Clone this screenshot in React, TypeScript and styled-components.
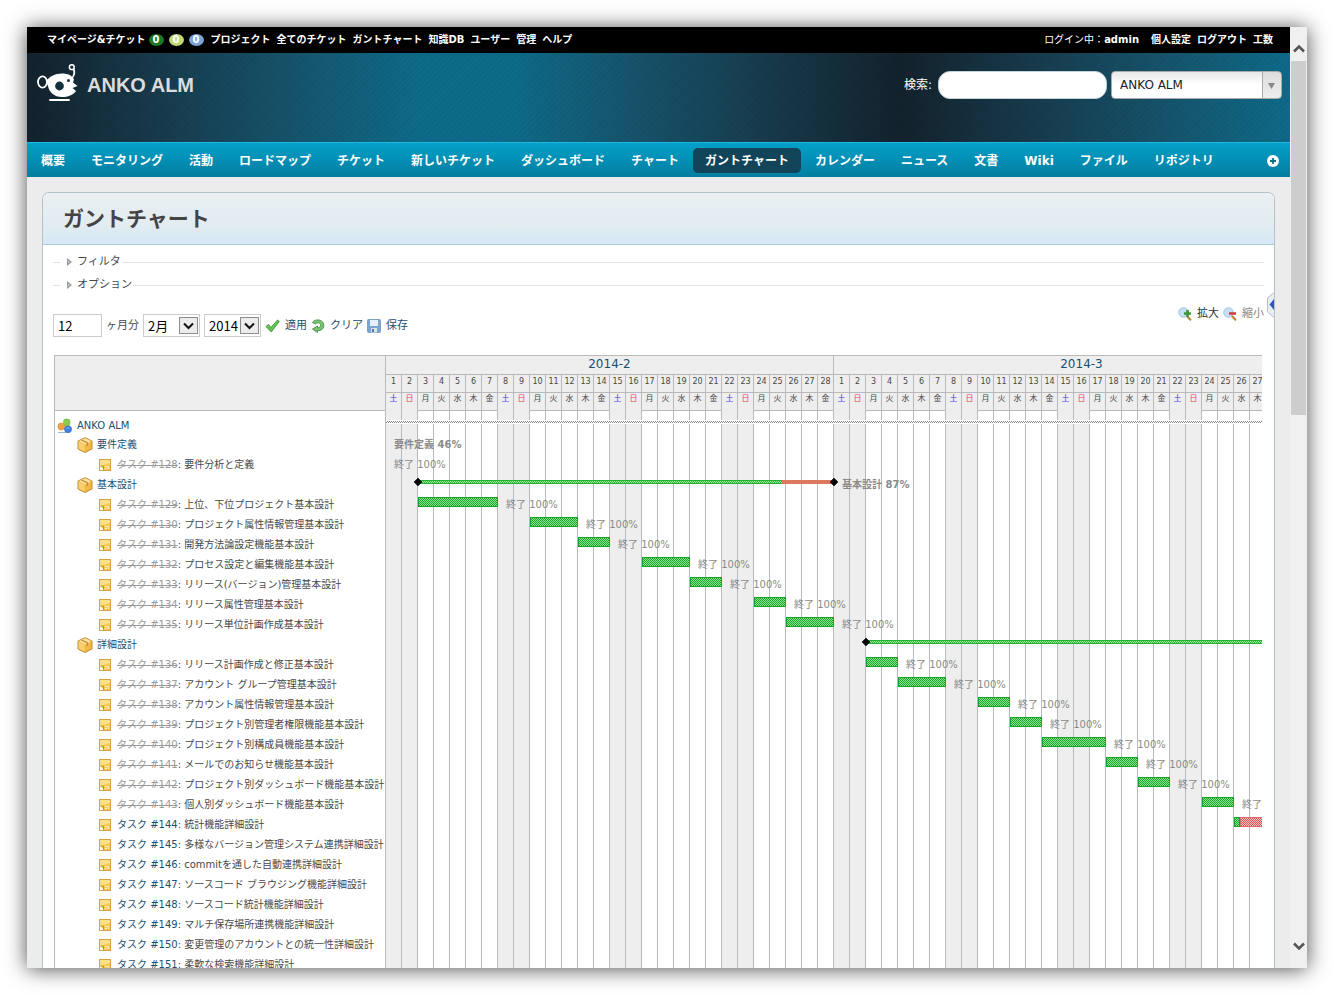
import React from "react";
import styled, { createGlobalStyle, css } from "styled-components";

const DAY = 16;
const uiFont = `"DejaVu Sans", "Noto Sans CJK JP", sans-serif`;
const link = "#1b4f6f";
const line = "#b9b9b9";
const shade = "#eeeeee";

const GlobalStyle = createGlobalStyle`
  *, *::before, *::after { box-sizing: border-box; }
  body {
    margin: 0;
    padding: 27px;
    background: #fff;
    color: #484848;
    font: 11px/18px ${uiFont};
    overflow: hidden;
  }
  a { color: inherit; text-decoration: none; }
  ul { margin: 0; padding: 0; list-style: none; }
  button, input, select { font: inherit; color: inherit; margin: 0; }
  svg { display: block; flex: none; }
`;

const Window = styled.div`
  display: flex;
  height: calc(100vh - 54px);
  overflow: hidden;
  background: #ececec;
`;
const WindowShadow = styled.div`
  box-shadow: 0 1px 20px rgba(0, 0, 0, 0.7);
`;
const Page = styled.div`
  flex: 1;
  min-width: 0;
  display: flex;
  flex-direction: column;
  overflow: hidden;
`;

const TopBar = styled.div`
  flex: none;
  height: 26px;
  padding: 0 17px 0 20px;
  display: flex;
  justify-content: space-between;
  align-items: center;
  background: #000;
  color: #fff;
  font-size: 10px;
  font-weight: bold;
  white-space: nowrap;
`;
const TopMenu = styled.nav`
  display: flex;
  align-items: center;
  gap: 6px;
`;
const Badges = styled.span`
  display: flex;
  gap: 5px;
  margin: 0 1px 0 -3px;
`;
const Badge = styled.a<{ $color: string }>`
  width: 15px;
  height: 12px;
  border-radius: 50%;
  background: ${(p) => p.$color};
  font-size: 10px;
  line-height: 12px;
  text-align: center;
`;
const Login = styled.span`
  font-weight: normal;
  margin-right: 6px;
`;

const Header = styled.header`
  flex: none;
  height: 89px;
  padding: 11px 8px 0 10px;
  display: flex;
  justify-content: space-between;
  align-items: flex-start;
  background:
    repeating-linear-gradient(135deg, rgba(0, 0, 0, 0.05) 0 1px, transparent 1px 4px),
    repeating-linear-gradient(90deg, #13222c 0, #173c4e 140px, #15566f 280px, #0d6a88 390px, #0d6a88 490px, #15566f 590px, #173c4e 730px, #13222c 874px);
`;
const Brand = styled.a`
  display: flex;
  align-items: flex-start;
  gap: 8px;
  color: #dcdcdc;
  font: bold 20px/42px "Liberation Sans", sans-serif;
`;
const Search = styled.form`
  display: flex;
  align-items: center;
  padding-top: 7px;
  color: #fff;
  font-size: 12px;
`;
const SearchInput = styled.input`
  width: 169px;
  height: 28px;
  margin: 0 4px 0 6px;
  padding: 0 12px;
  border: 1px solid #c3d3da;
  border-radius: 12px;
  background: #fff;
  color: #333;
  outline: none;
`;
const SelectWrap = styled.span`
  position: relative;
  display: inline-flex;
`;
const ProjectSelect = styled.select`
  appearance: none;
  width: 171px;
  height: 28px;
  padding: 0 28px 0 8px;
  border: 1px solid #aaa;
  border-radius: 4px;
  color: #222;
  background:
    linear-gradient(#aaa, #aaa) right 18px top / 1px 100% no-repeat,
    linear-gradient(#ddd, #eee) right / 18px 100% no-repeat,
    linear-gradient(#e9e9e9, #fff 50%);
`;
const SelectArrow = styled.svg`
  position: absolute;
  right: 7px;
  top: 12px;
  pointer-events: none;
`;

const MainMenu = styled.nav`
  flex: none;
  height: 35px;
  padding: 5px 11px 4px 2px;
  border-top: 1px solid #1fb9df;
  display: flex;
  align-items: center;
  justify-content: space-between;
  background: linear-gradient(#03a0c9, #047d9f);
`;
const MenuList = styled.ul`
  display: flex;
  gap: 2px;
`;
const MenuLink = styled.a<{ $active?: boolean }>`
  display: block;
  padding: 2px 12px 0;
  border-radius: 5px;
  color: #fff;
  font-size: 12px;
  font-weight: bold;
  line-height: 23px;
  white-space: nowrap;
  ${(p) => p.$active && css`background: #12455a;`}
`;
const IconButton = styled.button`
  padding: 0;
  border: 0;
  background: none;
  cursor: pointer;
`;

const Panel = styled.main`
  position: relative;
  flex: 1 0 auto;
  margin: 15px 15px 0;
  border: 1px solid #b4c2c9;
  border-bottom: 0;
  border-radius: 7px 7px 0 0;
  background: #fff;
`;
const PanelHead = styled.div`
  height: 52px;
  padding: 0 20px;
  border-bottom: 1px solid #a9cad9;
  border-radius: 6px 6px 0 0;
  background: linear-gradient(#ebeff1, #e2ecf1 60%, #d6e8f4);
`;
const Title = styled.h1`
  margin: 0;
  color: #444;
  font: bold 21px/49px "Noto Sans CJK JP", sans-serif;
`;
const PanelBody = styled.div`
  padding: 8px 10px 0;
`;
const FoldSet = styled.fieldset`
  min-width: 0;
  height: 18px;
  margin: 0 0 5px;
  padding: 0 7px;
  border: 0;
  border-top: 1px solid #e2e2e2;
`;
const FoldLegend = styled.legend`
  padding: 0 1px 0 7px;
`;
const FoldButton = styled.button`
  display: flex;
  align-items: center;
  gap: 5px;
  padding: 0;
  border: 0;
  background: none;
  line-height: 18px;
`;

const Toolbar = styled.div`
  display: flex;
  justify-content: space-between;
  align-items: flex-start;
  padding-top: 6px;
  white-space: nowrap;
`;
const Controls = styled.form`
  display: flex;
  align-items: center;
  gap: 4px;
  margin: 9px 0 18px;
`;
const fieldBox = css`
  height: 23px;
  border: 1px solid #ccc;
  border-radius: 0;
  background: #fff;
  color: #000;
  font: 13px/20px "Noto Sans CJK JP", sans-serif;
`;
const MonthsInput = styled.input`
  ${fieldBox}
  width: 49px;
  padding: 0 4px;
`;
const DateSelect = styled.select`
  ${fieldBox}
  appearance: none;
  width: 57px;
  padding: 0 0 0 4px;
`;
const DateArrow = styled.span`
  position: absolute;
  right: 2px;
  top: 3px;
  width: 19px;
  height: 17px;
  display: grid;
  place-items: center;
  border: 1px solid #8c8c8c;
  background: #ececec;
  pointer-events: none;
`;
const Action = styled.a<{ $tone?: string }>`
  display: flex;
  align-items: center;
  gap: 5px;
  color: ${(p) => p.$tone ?? link};
`;
const Zoomers = styled.div`
  display: flex;
  gap: 4px;
`;
const SideHandle = styled.button`
  position: absolute;
  right: 0;
  top: 99px;
  padding: 0;
  border: 0;
  background: none;
`;

const Gantt = styled.section`
  display: grid;
  grid-template-columns: 332px minmax(0, 1fr);
  margin: 0 2px 0 1px;
  border-top: 1px solid ${line};
`;
const TreePane = styled.div`
  border: solid ${line};
  border-width: 0 1px;
`;
const TreeHead = styled.div`
  height: 55px;
  border-bottom: 1px solid ${line};
  background: ${shade};
`;
const Tree = styled.ul`
  padding: 6px 0 2px;
  font-size: 10px;
`;
const TreeRow = styled.li<{ $level: number }>`
  height: ${(p) => (p.$level === 0 ? 18 : 20)}px;
  padding-left: ${(p) => [2, 22, 44][p.$level]}px;
  display: flex;
  align-items: center;
  gap: ${(p) => (p.$level === 2 ? 6 : 4)}px;
  line-height: 20px;
  white-space: nowrap;
`;
const TreeLink = styled.a<{ $closed?: boolean }>`
  color: ${(p) => (p.$closed ? "#999" : link)};
  ${(p) => p.$closed && css`text-decoration: line-through;`}
`;

const Timeline = styled.div`
  overflow: hidden;
  display: grid;
  grid-template-rows: 18px 1fr;
`;
const Months = styled.div`
  display: flex;
  background: ${shade};
`;
const Month = styled.div`
  flex: none;
  border-right: 1px solid ${line};
  color: ${link};
  font-size: 12px;
  line-height: 17px;
  text-align: center;
`;
const Canvas = styled.div`
  display: grid;
  grid-template-columns: minmax(0, 1fr);
  > * { grid-area: 1 / 1; }
`;
const Days = styled.div`
  display: flex;
`;
const Day = styled.div<{ $off: boolean }>`
  flex: none;
  width: ${DAY}px;
  border-right: 1px solid ${line};
  background: ${(p) => (p.$off ? shade : "#fff")};
  font-size: 8px;
  text-align: center;
`;
const DayNumber = styled.div`
  height: 18px;
  border-top: 1px solid ${line};
  background: ${shade};
  line-height: 14px;
`;
const DayName = styled.div<{ $dow: number }>`
  height: 19px;
  border-top: 1px solid ${line};
  border-bottom: 1px solid ${(p) => (p.$dow > 4 ? shade : line)};
  background: ${shade};
  line-height: 11px;
  color: ${(p) => (p.$dow === 5 ? "#3d3de0" : p.$dow === 6 ? "#e04848" : "inherit")};
`;
const checker = (a: string, b: string) =>
  `repeating-conic-gradient(${a} 0 25%, ${b} 0 50%) 0 0 / 2px 2px`;

const Rows = styled.div`
  position: relative;
  padding-top: 46px;
  overflow: hidden;
`;
const TopRule = styled.div`
  height: 4px;
  margin: 0 0 10px;
  border: solid #fff;
  border-width: 1px 0;
  background: ${checker("#888", "#fff")};
`;
const GanttRow = styled.div`
  height: 20px;
  display: flex;
  align-items: flex-start;
`;
const RowLabel = styled.span<{ $strong?: boolean }>`
  flex: none;
  margin-left: 8px;
  color: #8a8a8a;
  font-size: 10px;
  font-weight: ${(p) => (p.$strong ? "bold" : "normal")};
  line-height: 22px;
  white-space: nowrap;
`;
const Bar = styled.div`
  flex: none;
  display: flex;
  height: 10px;
  margin-top: 3px;
`;
const BarPart = styled.div<{ $late?: boolean }>`
  height: 100%;
  border: 1px solid ${(p) => (p.$late ? "#dd6a6a" : "#17a329")};
  background: ${(p) => (p.$late ? checker("#d65555", "#f6c3c3") : checker("#14a824", "#8fe296"))};
`;
const GroupBar = styled.div`
  position: relative;
  flex: none;
  display: flex;
  height: 4px;
  margin-top: 6px;
`;
const GroupPart = styled.div<{ $late?: boolean }>`
  border: solid ${(p) => (p.$late ? "#dd7760" : "#25b334")};
  border-width: 1px 0;
  background: ${(p) => (p.$late ? "#dd7760" : checker("#25b334", "#a5eba9"))};
`;
const Diamond = styled.svg<{ $end?: boolean }>`
  position: absolute;
  top: -2px;
  ${(p) => (p.$end ? "right: -4px;" : "left: -4px;")}
`;

const ScrollTrack = styled.div`
  flex: none;
  width: 17px;
  display: flex;
  flex-direction: column;
  align-items: center;
  background: #f0f0f0;
`;
const ScrollButton = styled.button<{ $up?: boolean }>`
  width: 17px;
  height: 34px;
  padding: ${(p) => (p.$up ? "8px 0 0" : "0 0 10px")};
  border: 0;
  background: none;
  display: grid;
  place-items: center;
`;
const ScrollThumb = styled.div`
  width: 15px;
  height: 354px;
  margin-bottom: auto;
  background: #cdcdcd;
`;

const Logo = () => (
  <svg width="42" height="38" viewBox="0 0 42 38" fill="none">
    <ellipse cx="5.500" cy="18" rx="4.500" ry="5.600" stroke="#fff" strokeWidth="1.800" />
    <path d="M9 17.500C12 12.500 18 9.500 25 9.500c6 0 10 2 12 6l-1 3 4.500 3.500-5 2 3.500 3C36 31 31 33 25 33 17 33 12 28 11 22Z" fill="#fff" />
    <circle cx="22.500" cy="22" r="4.400" fill="#15303d" />
    <circle cx="31.500" cy="16.500" r="1.500" fill="#15303d" />
    <circle cx="34.800" cy="3.200" r="2.400" stroke="#fff" strokeWidth="1.500" />
    <path d="M36.500 5C38 8 37.500 11 35 14" stroke="#fff" strokeWidth="1.800" />
    <path d="M13 36h19" stroke="#fff" strokeWidth="1.800" strokeLinecap="round" />
  </svg>
);
const PlusIcon = () => (
  <svg width="12" height="12" viewBox="0 0 12 12">
    <circle cx="6" cy="6" r="6" fill="#fff" />
    <path d="M6 3v6M3 6h6" stroke="#0c6f8c" strokeWidth="1.800" />
  </svg>
);
const FoldIcon = () => (
  <svg width="5" height="8" viewBox="0 0 5 8">
    <path d="M0 0 5 4 0 8Z" fill="#999" />
    <path d="M1 2.500v3L3 4Z" fill="#ccc" />
  </svg>
);
const Chevron = ({ up }: { up?: boolean }) => (
  <svg width="12" height="9" viewBox="0 0 12 9">
    <path d={up ? "M1 7.500 6 2.500l5 5" : "M1 1.500 6 6.500l5-5"} fill="none" stroke="#555" strokeWidth="2.600" />
  </svg>
);
const CheckIcon = () => (
  <svg width="15" height="14" viewBox="0 0 15 14">
    <path d="M1 7.500 3.500 5.500 6 8.500 12.500 1l1.800 1.500L6.200 13Z" fill="#63c556" stroke="#3a9a35" strokeWidth=".9" />
  </svg>
);
const ReloadIcon = () => (
  <svg width="14" height="14" viewBox="0 0 14 14">
    <path d="M1.500 3.500C3 .8 7.500 0 10.500 2c3.200 2.300 3.200 7-.5 9-1.200.6-2.500.7-3.500.6V13.500L1.500 10 6.500 7v1.700c1.700.2 3.200-.7 3.200-2.400C9.700 3.800 6 3 4.500 5Z" fill="#7cc474" stroke="#3f8f42" strokeWidth=".9" />
  </svg>
);
const SaveIcon = () => (
  <svg width="14" height="14" viewBox="0 0 14 14">
    <rect x=".5" y=".5" width="13" height="13" rx="1" fill="#7ba4d2" stroke="#7f9fc6" />
    <path d="M3 1h8v6H3Z" fill="#e6eff9" />
    <path d="M4 9h6v4.500H4Z" fill="#dce3ea" />
    <path d="M5 10h2v3H5Z" fill="#54779f" />
  </svg>
);
const ZoomIcon = ({ out }: { out?: boolean }) => (
  <svg width="14" height="14" viewBox="0 0 14 14">
    <path d="m9 9 3.200 3.500" stroke="#b98a3c" strokeWidth="2.400" strokeLinecap="round" />
    <circle cx="5.500" cy="5.500" r="4.800" fill="#c5def4" stroke="#a9c4df" />
    {out ? (
      <path d="M6 6.500h7" stroke="#d43f3f" strokeWidth="2.600" />
    ) : (
      <path d="M9.500 3v7M6 6.500h7" stroke="#3e9636" strokeWidth="2.600" />
    )}
  </svg>
);
const ProjectIcon = () => (
  <svg width="16" height="16" viewBox="0 0 16 16">
    <path d="M1 14.500h12" stroke="#9ab7d8" />
    <rect x="6.500" y="1" width="6.500" height="7" rx="2.500" fill="#8bcb52" stroke="#6fb03c" strokeWidth=".6" />
    <rect x="1" y="5" width="6.500" height="7" rx="3" fill="#f0a244" stroke="#dd8c2d" strokeWidth=".6" />
    <rect x="7.500" y="8" width="7" height="6.500" rx="3" fill="#3f7fe0" stroke="#2c64bd" strokeWidth=".6" />
    <path d="M9.500 10.500c1-1 2.500-1 3 0" stroke="#9cc4ff" fill="none" />
  </svg>
);
const PackageIcon = () => (
  <svg width="16" height="16" viewBox="0 0 16 16">
    <path d="M8 .7 15 4v8l-7 3.500L1 12V4Z" fill="#f2b944" stroke="#b98325" strokeWidth=".9" />
    <path d="M8 1.300 14.300 4.200 8 7.500 1.700 4.200Z" fill="#fbe2a0" />
    <path d="M1.600 4.800 7.600 8v6.600l-6-3Z" fill="#f8cf6c" />
    <path d="m4.500 3 6 3v3" stroke="#c48a2a" strokeWidth="1.300" fill="none" />
  </svg>
);
const TicketIcon = () => (
  <svg width="12" height="12" viewBox="0 0 12 12">
    <rect x=".5" y=".5" width="11" height="11" fill="#f8c64f" stroke="#d8a240" />
    <path d="M1 1h10v3L1 7Z" fill="#fbe08c" />
    <path d="M6 7.500h3.500V10M6 9.500h2" stroke="#fdf0c0" fill="none" />
    <path d="M1 7 5 11H1Z" fill="#fff" />
    <path d="M1.500 7h3v4" stroke="#c48d2f" strokeWidth=".9" fill="none" />
  </svg>
);

type Item = {
  level: number;
  name: string;
  id?: number;
  closed?: boolean;
  start?: number;
  days?: number;
  done?: number;
  label?: string;
  openEnd?: boolean;
};

const task = (id: number, name: string, start: number, days: number): Item => ({
  level: 2, id, name, closed: true, start, days, done: days * DAY, label: "終了 100%",
});
const todo = (id: number, name: string): Item => ({ level: 2, id, name });

const items: Item[] = [
  { level: 1, name: "要件定義", label: "要件定義 46%", start: 0 },
  task(128, "要件分析と定義", 0, 0),
  { level: 1, name: "基本設計", label: "基本設計 87%", start: 2, days: 26, done: 364 },
  task(129, "上位、下位プロジェクト基本設計", 2, 5),
  task(130, "プロジェクト属性情報管理基本設計", 9, 3),
  task(131, "開発方法論設定機能基本設計", 12, 2),
  task(132, "プロセス設定と編集機能基本設計", 16, 3),
  task(133, "リリース(バージョン)管理基本設計", 19, 2),
  task(134, "リリース属性管理基本設計", 23, 2),
  task(135, "リリース単位計画作成基本設計", 25, 3),
  { level: 1, name: "詳細設計", start: 30, days: 29, done: 464, openEnd: true },
  task(136, "リリース計画作成と修正基本設計", 30, 2),
  task(137, "アカウント グループ管理基本設計", 32, 3),
  task(138, "アカウント属性情報管理基本設計", 37, 2),
  task(139, "プロジェクト別管理者権限機能基本設計", 39, 2),
  task(140, "プロジェクト別構成員機能基本設計", 41, 4),
  task(141, "メールでのお知らせ機能基本設計", 45, 2),
  task(142, "プロジェクト別ダッシュボード機能基本設計", 47, 2),
  task(143, "個人別ダッシュボード機能基本設計", 51, 2),
  { level: 2, id: 144, name: "統計機能詳細設計", start: 53, days: 6, done: 6 },
  todo(145, "多様なバージョン管理システム連携詳細設計"),
  todo(146, "commitを通した自動連携詳細設計"),
  todo(147, "ソースコード ブラウジング機能詳細設計"),
  todo(148, "ソースコード統計機能詳細設計"),
  todo(149, "マルチ保存場所連携機能詳細設計"),
  todo(150, "変更管理のアカウントとの統一性詳細設計"),
  todo(151, "柔軟な検索機能詳細設計"),
];

const months = [
  { label: "2014-2", days: 28, shown: 28 },
  { label: "2014-3", days: 31, shown: 27 },
];
const dayNames = ["月", "火", "水", "木", "金", "土", "日"];
const calendar = months
  .flatMap((m) => Array.from({ length: m.shown }, (_, i) => i + 1))
  .map((n, i) => ({ n, dow: (i + 5) % 7 }));

const topLinks = ["プロジェクト", "全てのチケット", "ガントチャート", "知識DB", "ユーザー", "管理", "ヘルプ"];
const menu = [
  "概要", "モニタリング", "活動", "ロードマップ", "チケット", "新しいチケット", "ダッシュボード",
  "チャート", "ガントチャート", "カレンダー", "ニュース", "文書", "Wiki", "ファイル", "リポジトリ",
];

const DiamondMark = ({ end }: { end?: boolean }) => (
  <Diamond $end={end} width="8" height="8" viewBox="0 0 8 8">
    <path d="M4 0 8 4 4 8 0 4Z" fill="#000" stroke="#000" strokeWidth=".5" />
  </Diamond>
);

const TimelineRow = ({ item }: { item: Item }) => {
  const { start = 0, days = 0, done = 0 } = item;
  const rest = days * DAY - done;
  const offset = { marginLeft: start * DAY };
  return (
    <GanttRow>
      {item.level === 1 ? (
        <GroupBar style={offset}>
          {done > 0 && <GroupPart style={{ width: done }} />}
          {rest > 0 && <GroupPart $late style={{ width: rest }} />}
          {days > 0 && <DiamondMark />}
          {days > 0 && !item.openEnd && <DiamondMark end />}
        </GroupBar>
      ) : (
        <Bar style={offset}>
          {done > 0 && <BarPart style={{ width: done }} />}
          {rest > 0 && <BarPart $late style={{ width: rest }} />}
        </Bar>
      )}
      {item.label && <RowLabel $strong={item.level === 1}>{item.label}</RowLabel>}
    </GanttRow>
  );
};

const DatePicker = ({ label, value }: { label: string; value: string }) => (
  <SelectWrap>
    <DateSelect aria-label={label} defaultValue={value}>
      <option>{value}</option>
    </DateSelect>
    <DateArrow>
      <svg width="11" height="8" viewBox="0 0 11 8">
        <path d="m1 1.500 4.500 4.500L10 1.500" fill="none" stroke="#111" strokeWidth="2" />
      </svg>
    </DateArrow>
  </SelectWrap>
);

const Fold = ({ label }: { label: string }) => (
  <FoldSet>
    <FoldLegend>
      <FoldButton type="button">
        <FoldIcon />
        {label}
      </FoldButton>
    </FoldLegend>
  </FoldSet>
);

export default function App() {
  return (
    <WindowShadow>
      <GlobalStyle />
      <Window>
        <Page>
          <TopBar>
            <TopMenu>
              <a href="#my">マイページ&amp;チケット</a>
              <Badges>
                <Badge href="#n1" $color="#1d7a24">0</Badge>
                <Badge href="#n2" $color="#c3d973">0</Badge>
                <Badge href="#n3" $color="#7ca3d6">0</Badge>
              </Badges>
              {topLinks.map((t) => <a key={t} href="#top">{t}</a>)}
            </TopMenu>
            <TopMenu>
              <Login>ログイン中：<b><a href="#admin">admin</a></b></Login>
              <a href="#account">個人設定</a>
              <a href="#logout">ログアウト</a>
              <a href="#time">工数</a>
            </TopMenu>
          </TopBar>

          <Header>
            <Brand href="#home"><Logo />ANKO ALM</Brand>
            <Search>
              <label htmlFor="q">検索:</label>
              <SearchInput id="q" />
              <SelectWrap>
                <ProjectSelect aria-label="プロジェクト" defaultValue="ANKO ALM">
                  <option>ANKO ALM</option>
                </ProjectSelect>
                <SelectArrow width="7" height="6" viewBox="0 0 7 6">
                  <path d="M0 0h7L3.500 6Z" fill="#888" />
                </SelectArrow>
              </SelectWrap>
            </Search>
          </Header>

          <MainMenu>
            <MenuList>
              {menu.map((m) => (
                <li key={m}>
                  <MenuLink href="#menu" $active={m === "ガントチャート"}>{m}</MenuLink>
                </li>
              ))}
            </MenuList>
            <IconButton type="button" aria-label="追加"><PlusIcon /></IconButton>
          </MainMenu>

          <Panel>
            <PanelHead><Title>ガントチャート</Title></PanelHead>
            <PanelBody>
              <Fold label="フィルタ" />
              <Fold label="オプション" />
              <Toolbar>
                <Controls>
                  <MonthsInput id="months" defaultValue="12" />
                  <label htmlFor="months">ヶ月分</label>
                  <DatePicker label="月" value="2月" />
                  <DatePicker label="年" value="2014" />
                  <Action href="#apply"><CheckIcon />適用</Action>
                  <Action href="#clear"><ReloadIcon />クリア</Action>
                  <Action href="#save"><SaveIcon />保存</Action>
                </Controls>
                <Zoomers>
                  <Action href="#in" $tone="#333"><ZoomIcon />拡大</Action>
                  <Action href="#out" $tone="#888"><ZoomIcon out />縮小</Action>
                </Zoomers>
              </Toolbar>

              <Gantt>
                <TreePane>
                  <TreeHead />
                  <Tree>
                    <TreeRow $level={0}><ProjectIcon /><TreeLink href="#p">ANKO ALM</TreeLink></TreeRow>
                    {items.map((it) =>
                      it.level === 1 ? (
                        <TreeRow key={it.name} $level={1}>
                          <PackageIcon /><TreeLink href="#v">{it.name}</TreeLink>
                        </TreeRow>
                      ) : (
                        <TreeRow key={it.name} $level={2}>
                          <TicketIcon />
                          <span>
                            <TreeLink href="#t" $closed={it.closed}>タスク #{it.id}</TreeLink>: {it.name}
                          </span>
                        </TreeRow>
                      )
                    )}
                  </Tree>
                </TreePane>
                <Timeline>
                  <Months>
                    {months.map((m) => (
                      <Month key={m.label} style={{ width: m.days * DAY }}>{m.label}</Month>
                    ))}
                  </Months>
                  <Canvas>
                    <Days>
                      {calendar.map((d, i) => (
                        <Day key={i} $off={d.dow > 4}>
                          <DayNumber>{d.n}</DayNumber>
                          <DayName $dow={d.dow}>{dayNames[d.dow]}</DayName>
                        </Day>
                      ))}
                    </Days>
                    <Rows>
                      <TopRule />
                      {items.map((it) => <TimelineRow key={it.name} item={it} />)}
                    </Rows>
                  </Canvas>
                </Timeline>
              </Gantt>
            </PanelBody>
            <SideHandle type="button" aria-label="サイドバー">
              <svg width="7" height="26" viewBox="0 0 7 26">
                <path d="M7 .5 .5 6v14L7 25.500" fill="#e8edf3" stroke="#b5bfca" />
                <path d="M7 7v11L2.500 12.500Z" fill="#2f56b8" />
              </svg>
            </SideHandle>
          </Panel>
        </Page>

        <ScrollTrack>
          <ScrollButton type="button" $up aria-label="上へ"><Chevron up /></ScrollButton>
          <ScrollThumb />
          <ScrollButton type="button" aria-label="下へ"><Chevron /></ScrollButton>
        </ScrollTrack>
      </Window>
    </WindowShadow>
  );
}
